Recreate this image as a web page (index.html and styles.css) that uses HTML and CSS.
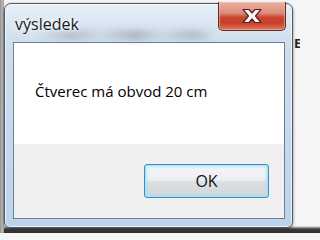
FILE: index.html
```html
<!DOCTYPE html>
<html lang="cs">
<head>
<meta charset="utf-8">
<title>výsledek</title>
<link rel="stylesheet" href="styles.css">
</head>
<body>
<div class="desk">
  <div class="window">
    <div class="titlebar">
      <span class="title">výsledek</span>
      <div class="blur"></div>
      <button class="close" aria-label="Zavřít">
        <svg width="22" height="16" viewBox="0 0 22 16">
          <path d="M2 1.5 L8 1.5 L11 5 L14 1.5 L20 1.5 L14.5 8 L20 14.5 L14 14.5 L11 11 L8 14.5 L2 14.5 L7.5 8 Z" fill="#ffffff" stroke="#5a1e14" stroke-width="1.2" stroke-linejoin="round"/>
        </svg>
      </button>
    </div>
    <div class="client">
      <div class="message">Čtverec má obvod 20 cm</div>
      <div class="footer">
        <button class="ok">OK</button>
      </div>
    </div>
  </div>
  <span class="behind">E</span>
</div>
</body>
</html>
```

FILE: styles.css
```css
html, body {
  margin: 0;
  padding: 0;
}
body {
  width: 300px;
  height: 233px;
  overflow: hidden;
  background: linear-gradient(to bottom, #f6f6f6 0, #f6f6f6 226px, #3f3f3f 229px, #2e2e2e 233px);
  font-family: "Open Sans", "Noto Sans", "DejaVu Sans", sans-serif;
}
.desk {
  position: relative;
  width: 300px;
  height: 233px;
  padding: 3px 0 0 4px;
  box-sizing: border-box;
  background: linear-gradient(to right, #8d8d8d 0, #bdbdbd 2px, #9a9a9a 4px, transparent 4px);
}
.behind {
  position: absolute;
  left: 294px;
  top: 34px;
  font-size: 13px;
  font-weight: bold;
  color: #222;
}
.window {
  width: 289px;
  height: 225px;
  box-sizing: border-box;
  border: 1px solid #4d5866;
  border-radius: 7px 7px 6px 6px;
  padding: 0 7px 8px 8px;
  display: flex;
  flex-direction: column;
  background: linear-gradient(to bottom, #e8f0f8 0, #dae6f2 20px, #cfdded 40px, #c6d9ee 120px, #bcd3ec 100%);
  box-shadow: inset 0 0 0 1px rgba(255,255,255,0.7), 0 1px 3px rgba(0,0,0,0.5);
}
.titlebar {
  position: relative;
  height: 38px;
  flex: none;
}
.title {
  position: absolute;
  left: 2px;
  top: 9px;
  font-size: 16px;
  color: #1a1a1a;
  text-shadow: 0 0 6px rgba(255,255,255,0.95), 0 0 3px rgba(255,255,255,0.9);
  z-index: 1;
}
.blur {
  position: absolute;
  left: 25px;
  right: 70px;
  top: 26px;
  height: 10px;
  background: linear-gradient(to right, rgba(150,160,172,0) 0, rgba(140,150,165,0.45) 18%, rgba(170,180,190,0.2) 35%, rgba(130,140,155,0.5) 55%, rgba(170,180,195,0.2) 70%, rgba(130,140,155,0.45) 88%, rgba(150,160,172,0) 100%);
  filter: blur(3px);
}
.close {
  position: absolute;
  right: -1px;
  top: -2px;
  width: 68px;
  height: 29px;
  padding: 0;
  border: 1px solid #5b2a22;
  border-top: none;
  border-radius: 0 0 5px 5px;
  background: linear-gradient(to bottom, #eab1a4 0, #dd8a78 40%, #c9452f 55%, #c8402b 75%, #dd7a5f 100%);
  box-shadow: inset 0 0 0 1px rgba(255,200,190,0.5);
  display: flex;
  align-items: center;
  justify-content: center;
}
.close svg {
  margin-top: -1px;
}
.client {
  flex: 1;
  display: flex;
  flex-direction: column;
  border: 1px solid #6f7f92;
  background: #f0f0f0;
}
.message {
  height: 101px;
  flex: none;
  box-sizing: border-box;
  background: #ffffff;
  padding: 38px 0 0 21px;
  font-size: 15px;
  line-height: 20px;
  color: #000;
}
.footer {
  flex: 1;
  display: flex;
  justify-content: flex-end;
  align-items: flex-start;
  padding: 20px 15px 0 0;
}
.ok {
  width: 125px;
  height: 34px;
  box-sizing: border-box;
  border: 1px solid #3c8fc4;
  border-radius: 3px;
  background: linear-gradient(to bottom, #f4f6f7 0, #eceeef 48%, #dde0e2 52%, #d3d6d9 100%);
  box-shadow: inset 0 0 0 1px #a9e2f7, inset 0 0 3px 2px rgba(160,225,250,0.6);
  font-family: "Open Sans", "Noto Sans", "DejaVu Sans", sans-serif;
  font-size: 16px;
  color: #111;
  padding: 0;
}
```
